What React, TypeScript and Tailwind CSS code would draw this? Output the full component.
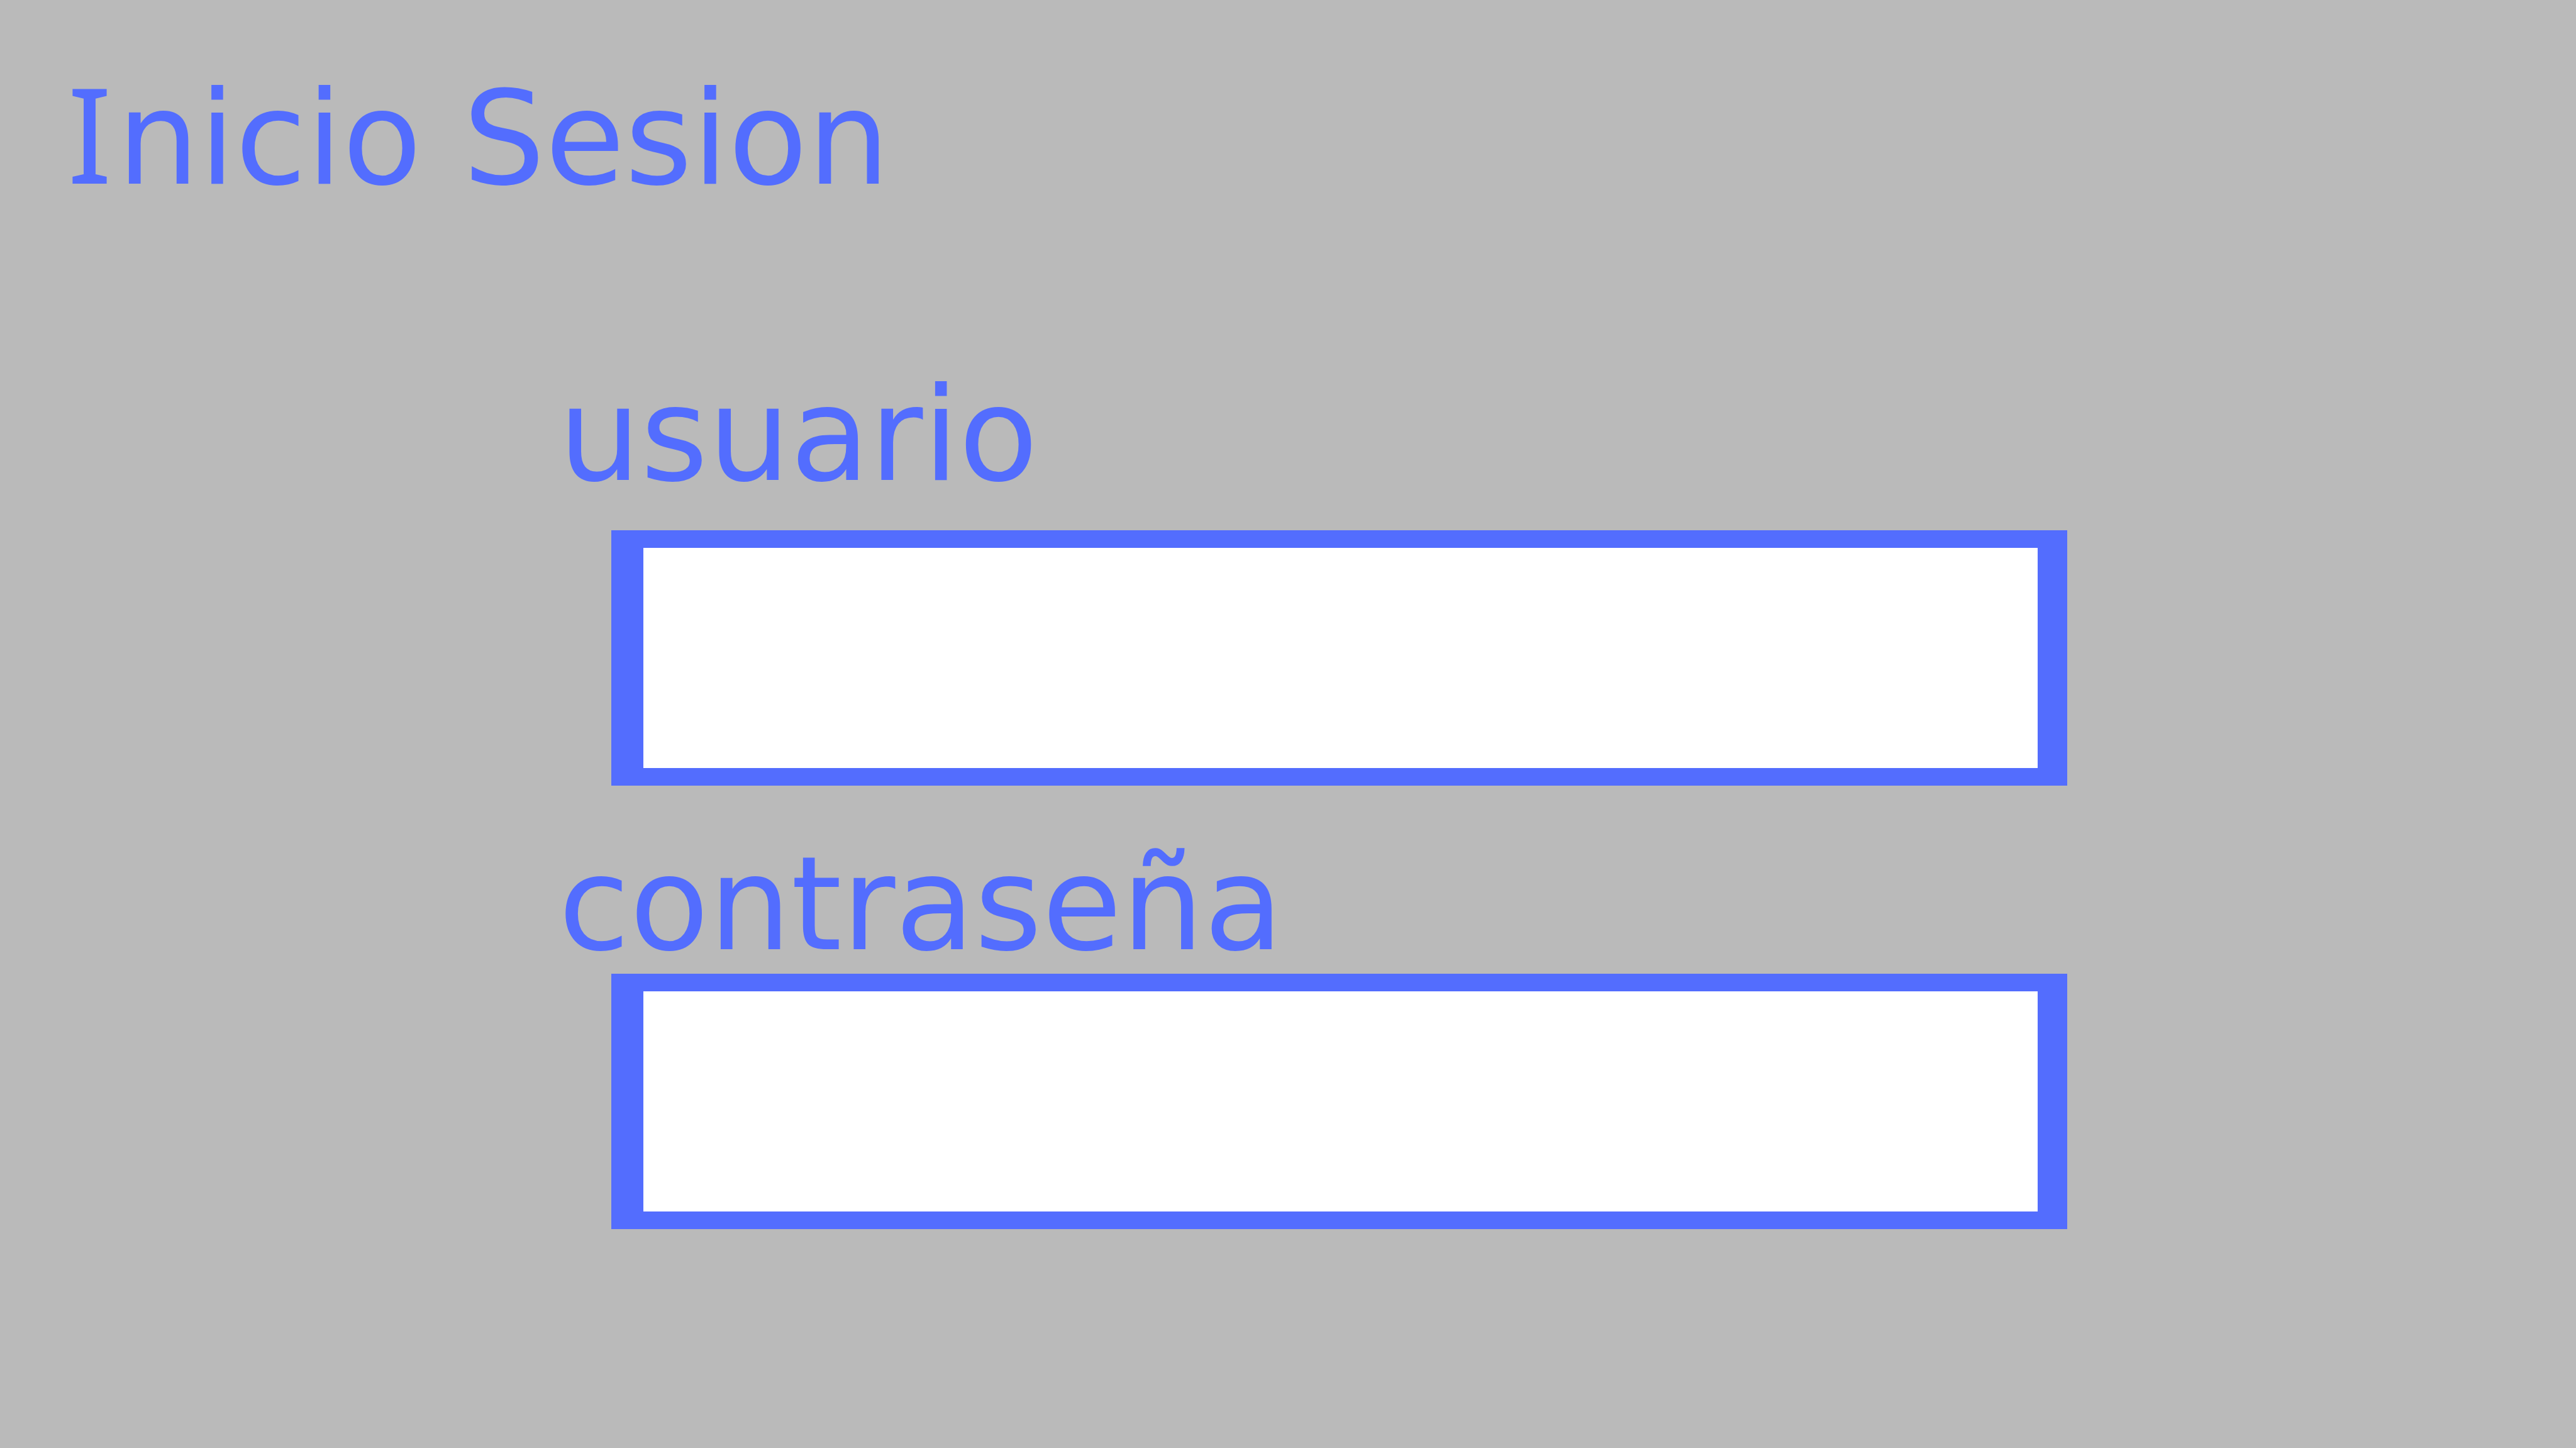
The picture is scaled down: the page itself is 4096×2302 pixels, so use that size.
const labelClass =
  "self-start font-['DejaVu_Sans',sans-serif] text-[206px] leading-[220px] text-[#536dfe]";

const inputClass =
  "ml-[84px] h-[406px] min-w-0 rounded-none border-y-28 border-r-47 border-l-51 border-[#536dfe] bg-white px-10 font-['DejaVu_Sans',sans-serif] text-[206px] text-[#536dfe] outline-none";

export default function App() {
  return (
    <main className="flex min-h-screen flex-col bg-[#bababa] pt-[111px]">
      <h1 className="pl-[107px] font-['DejaVu_Sans',sans-serif] text-[206px] leading-[220px] text-[#536dfe]">
        <span className="mr-2 font-['Noto_Sans',sans-serif] text-[210px] leading-0">I</span>nicio Sesion
      </h1>
      <form className="mt-[251px] flex flex-col pr-[809px] pl-[888px]">
        <label htmlFor="usuario" className={labelClass}>
          usuario
        </label>
        <input id="usuario" name="usuario" type="text" className={`mt-[41px] ${inputClass}`} />
        <label htmlFor="contrasena" className={`mt-[79px] ${labelClass}`}>
          contraseña
        </label>
        <input id="contrasena" name="contrasena" type="password" className={inputClass} />
      </form>
    </main>
  );
}
